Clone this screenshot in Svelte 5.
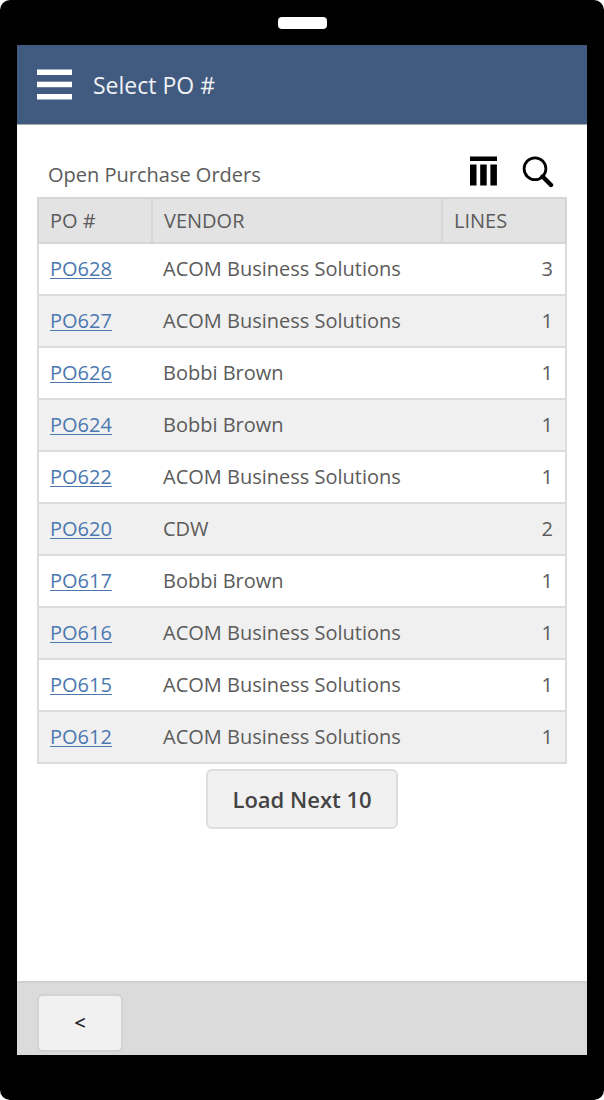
<script>
  const orders = [
    { po: 'PO628', vendor: 'ACOM Business Solutions', lines: 3 },
    { po: 'PO627', vendor: 'ACOM Business Solutions', lines: 1 },
    { po: 'PO626', vendor: 'Bobbi Brown', lines: 1 },
    { po: 'PO624', vendor: 'Bobbi Brown', lines: 1 },
    { po: 'PO622', vendor: 'ACOM Business Solutions', lines: 1 },
    { po: 'PO620', vendor: 'CDW', lines: 2 },
    { po: 'PO617', vendor: 'Bobbi Brown', lines: 1 },
    { po: 'PO616', vendor: 'ACOM Business Solutions', lines: 1 },
    { po: 'PO615', vendor: 'ACOM Business Solutions', lines: 1 },
    { po: 'PO612', vendor: 'ACOM Business Solutions', lines: 1 }
  ];
</script>

<div class="device">
  <div class="top"><span class="speaker"></span></div>
  <div class="screen">
    <header>
      <button class="icon" aria-label="Menu">
        <svg width="36" height="32" viewBox="0 0 36 32" fill="#fff">
          <rect x="0" y="0.5" width="35" height="5.5" />
          <rect x="0" y="12.7" width="35" height="5.5" />
          <rect x="0" y="25" width="35" height="5.5" />
        </svg>
      </button>
      <h1>Select PO #</h1>
    </header>
    <main>
      <div class="caption">
        <h2 id="orders-title">Open Purchase Orders</h2>
        <div class="tools">
          <button class="icon" aria-label="Columns">
            <svg width="28" height="32" viewBox="0 0 28 32" fill="#000">
              <rect x="0" y="0.5" width="27" height="4.5" />
              <rect x="0" y="8.5" width="6.5" height="21" />
              <rect x="10.2" y="8.5" width="6.5" height="21" />
              <rect x="20.4" y="8.5" width="6.5" height="21" />
            </svg>
          </button>
          <button class="icon" aria-label="Search">
            <svg width="32" height="32" viewBox="0 0 32 32" fill="none" stroke="#000">
              <circle cx="13" cy="12.7" r="10.9" stroke-width="2.8" />
              <path d="M20.5 20.5 L29 29" stroke-width="4.4" stroke-linecap="round" />
            </svg>
          </button>
        </div>
      </div>
      <table aria-labelledby="orders-title">
        <colgroup><col class="c-po" /><col class="c-vendor" /><col class="c-lines" /></colgroup>
        <thead>
          <tr><th scope="col">PO #</th><th scope="col">VENDOR</th><th scope="col">LINES</th></tr>
        </thead>
        <tbody>
          {#each orders as order (order.po)}
            <tr>
              <td><a href={'#' + order.po}>{order.po}</a></td>
              <td>{order.vendor}</td>
              <td class="num">{order.lines}</td>
            </tr>
          {/each}
        </tbody>
      </table>
      <button class="btn load">Load Next 10</button>
    </main>
    <footer>
      <button class="btn back">&lt;</button>
    </footer>
  </div>
</div>

<style>
  :global(body) {
    margin: 0;
    background: #fff;
  }
  .device {
    box-sizing: border-box;
    min-height: 100vh;
    padding: 0 17px 45px;
    display: flex;
    flex-direction: column;
    background: #000;
    border-radius: 10px;
    font-family: 'Open Sans', 'Noto Sans', sans-serif;
    font-size: 20px;
    line-height: 28px;
    color: #5b5b5b;
  }
  .top {
    height: 45px;
    display: flex;
    align-items: center;
    justify-content: center;
  }
  .speaker {
    width: 49px;
    height: 12px;
    border-radius: 4px;
    background: #fff;
  }
  .screen {
    flex: 1;
    display: flex;
    flex-direction: column;
    background: #fff;
  }
  header {
    box-sizing: border-box;
    height: 80px;
    padding: 0 20px;
    display: flex;
    align-items: center;
    gap: 20px;
    background: #415a80;
    border-bottom: 1px solid #a5a9b0;
  }
  h1,
  h2 {
    margin: 0;
    font-size: inherit;
    font-weight: 400;
  }
  h1 {
    font-size: 23px;
    color: #f0f2f5;
  }
  .icon {
    padding: 0;
    border: 0;
    background: none;
    cursor: pointer;
  }
  svg {
    display: block;
  }
  main {
    flex: 1;
    display: flex;
    flex-direction: column;
    padding: 28px 20px;
  }
  .caption {
    display: flex;
    align-items: flex-start;
    justify-content: space-between;
    height: 41px;
    padding: 3px 13px 0 11px;
  }
  h2 {
    padding-top: 5px;
  }
  .tools {
    display: flex;
    gap: 24px;
  }
  table {
    width: 100%;
    table-layout: fixed;
    border-collapse: collapse;
    border: 2px solid #dcdcdc;
  }
  .c-po {
    width: 114px;
  }
  .c-lines {
    width: 124px;
  }
  th,
  td {
    box-sizing: border-box;
    padding: 0 12px 0 11px;
    text-align: left;
    font-weight: 400;
  }
  th {
    height: 45px;
    background: #e3e3e3;
    border: 2px solid #d6d6d6;
  }
  td {
    height: 52px;
    border-bottom: 2px solid #dcdcdc;
  }
  tbody tr:nth-child(even) {
    background: #f0f0f0;
  }
  .num {
    text-align: right;
  }
  a {
    color: #4c78b0;
    text-decoration-thickness: 1px;
    text-underline-offset: 2px;
  }
  .btn {
    box-sizing: border-box;
    background: #f1f1f1;
    border: 2px solid #dedede;
    border-radius: 6px;
    font: inherit;
    font-weight: 600;
    cursor: pointer;
  }
  .load {
    align-self: center;
    height: 60px;
    margin-top: 5px;
    padding: 0 24px;
    font-size: 22px;
    color: #444;
  }
  footer {
    box-sizing: border-box;
    height: 74px;
    padding: 11px 20px 0;
    background: #dbdbdb;
    border-top: 2px solid #cfcfcf;
  }
  .back {
    width: 86px;
    height: 58px;
    border-color: #d3d3d3;
    color: #222;
  }
</style>
